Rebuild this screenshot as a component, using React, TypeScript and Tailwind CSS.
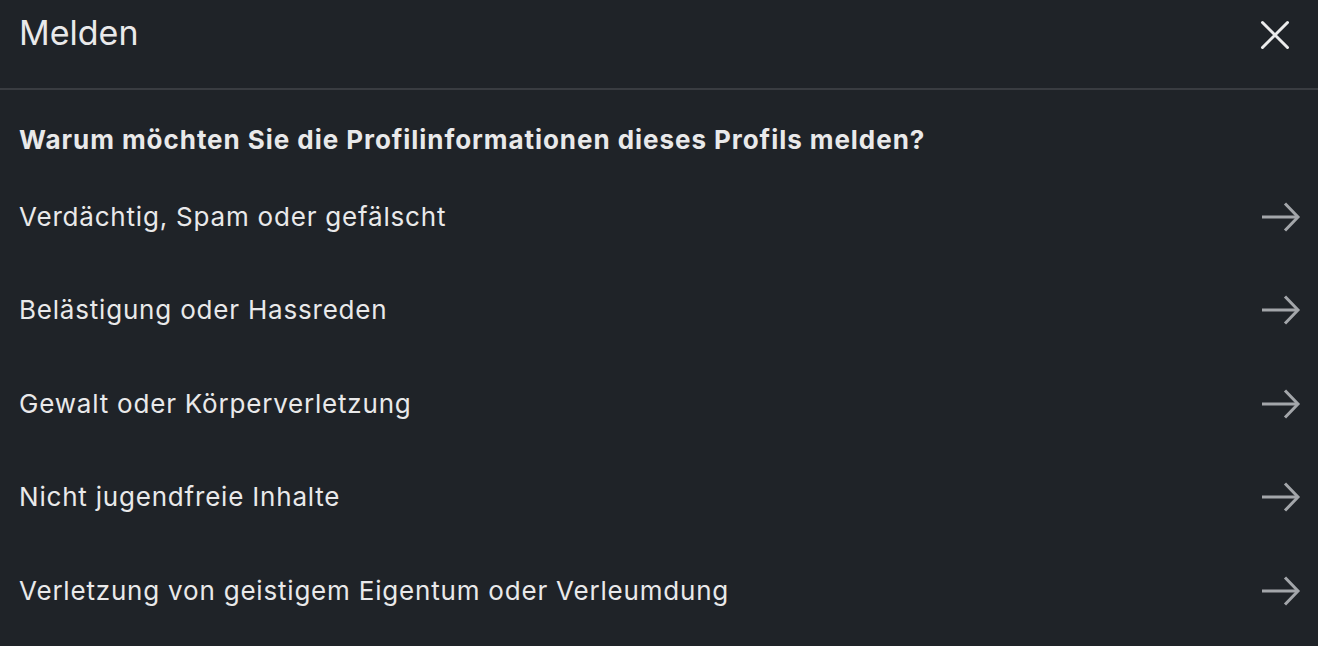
import React from "react";

const items = [
  "Verdächtig, Spam oder gefälscht",
  "Belästigung oder Hassreden",
  "Gewalt oder Körperverletzung",
  "Nicht jugendfreie Inhalte",
  "Verletzung von geistigem Eigentum oder Verleumdung",
];

function Arrow() {
  return (
    <svg width="40" height="30" viewBox="0 0 40 30" fill="none" stroke="#a3a6aa" strokeWidth="3" strokeLinecap="butt" strokeLinejoin="miter">
      <path d="M1 15 H37" />
      <path d="M24 1.5 L37 15 L24 28.5" />
    </svg>
  );
}

export default function App() {
  return (
    <div className="w-[1318px] h-[646px] bg-[#1f2328] text-[#e9e9ea] overflow-hidden" style={{ fontFamily: "Inter, 'Noto Sans', sans-serif" }}>
      <div className="h-[88px] flex items-start justify-between pl-[19px] pr-[28px] pt-[12px]">
        <h1 className="text-[34px] leading-[42px] font-normal">Melden</h1>
        <svg width="30" height="30" viewBox="0 0 30 30" className="mt-[8px]" stroke="#ececec" strokeWidth="3" strokeLinecap="round">
          <path d="M2.5 2.5 L27.5 27.5 M27.5 2.5 L2.5 27.5" />
        </svg>
      </div>
      <div className="h-[2px] bg-[#393c41]" />
      <div className="pt-[34px] pl-[19px] pr-[17px]">
        <h2 className="text-[26px] leading-[32px] font-bold tracking-[0.95px]">Warum möchten Sie die Profilinformationen dieses Profils melden?</h2>
        <div className="mt-[14px]">
          {items.map((t) => (
            <div key={t} className="h-[93.5px] flex items-center justify-between">
              <span className="text-[26px] leading-[32px] tracking-[0.8px]">{t}</span>
              <Arrow />
            </div>
          ))}
        </div>
      </div>
    </div>
  );
}
